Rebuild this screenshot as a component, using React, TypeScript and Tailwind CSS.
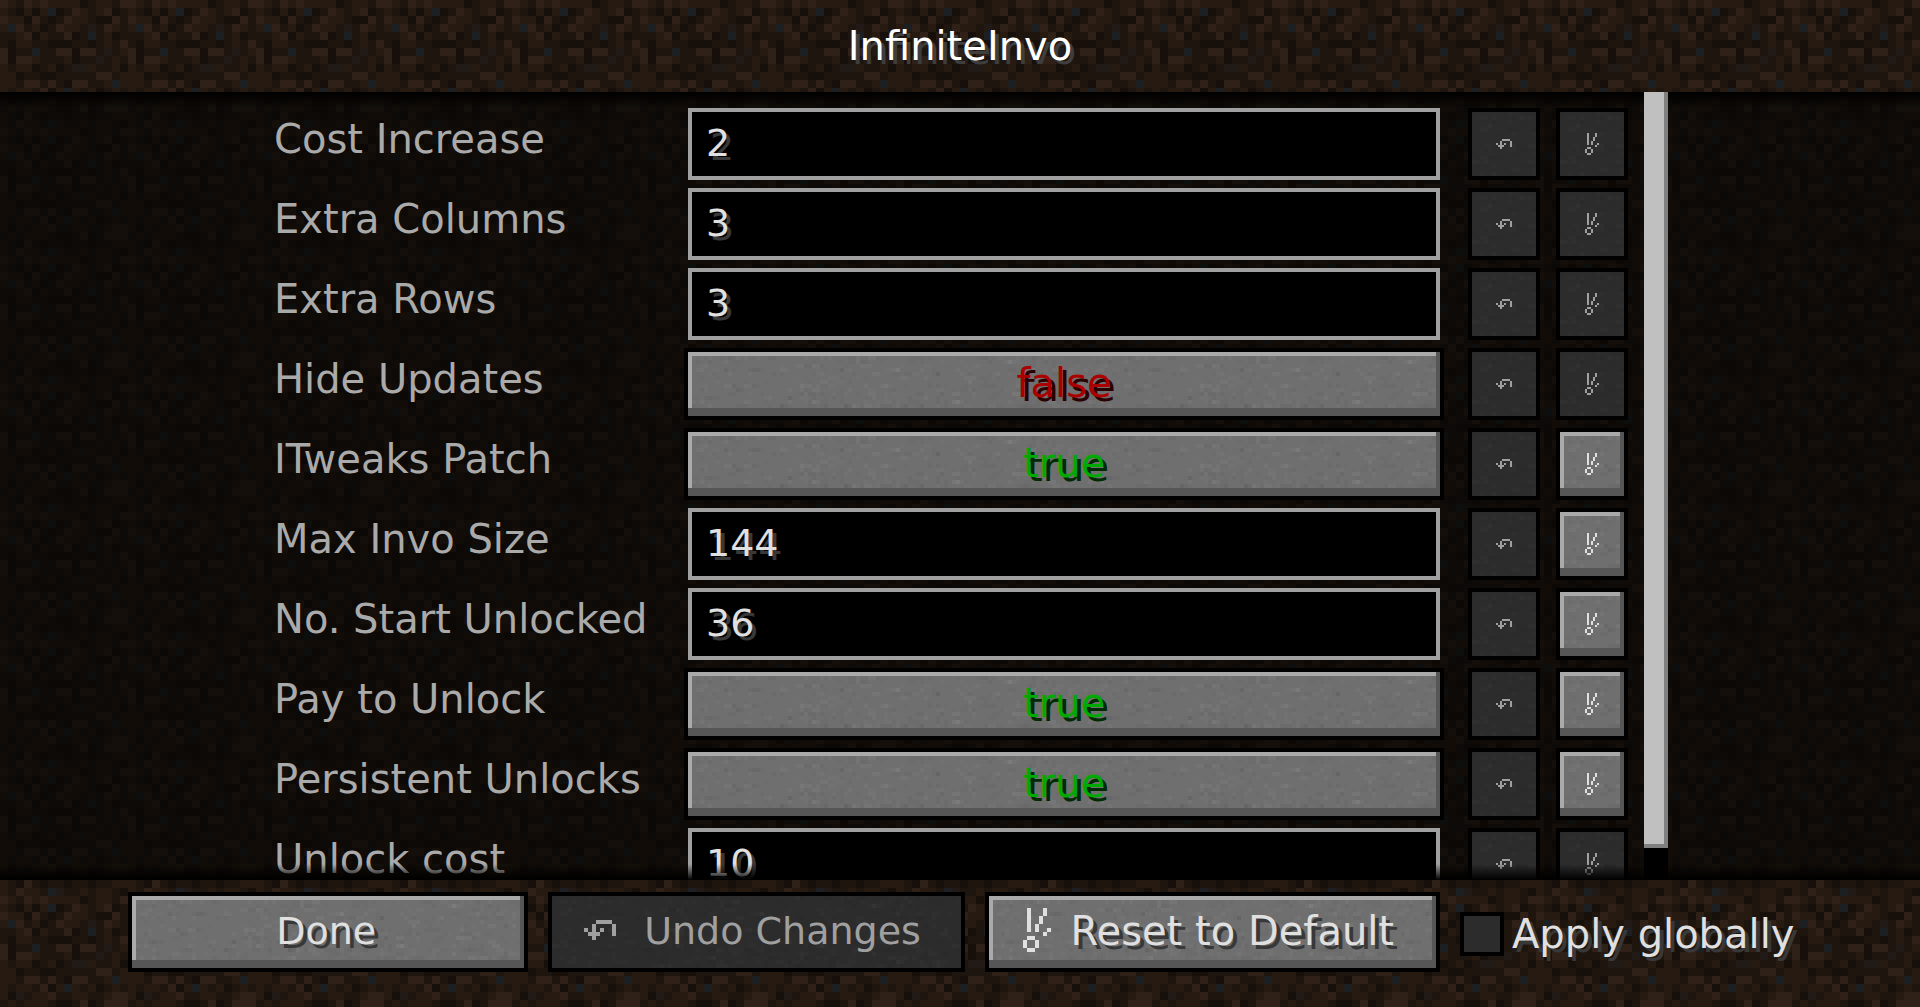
import React, { useState } from "react";

const DIRT = [
  "dcbdcdccccabccbd",
  "cbacaceabdcbcdab",
  "dccadbabdccbaadb",
  "cedbcabdccbfbdcb",
  "bbcdacbbdabebcab",
  "baccbbaaabbabcbd",
  "dabbebbddaddbfbc",
  "daddcbbbcabbfbcb",
  "cbccabcabffcbbca",
  "ccabbaabbbbbddbc",
  "ccbddbdbaddbbcec",
  "cbccbdacecbcabcb",
  "cafbccdbbccbbcdd",
  "bcbcccbaabdabddd",
  "cbadbabbabbabbcc",
  "cbdccbefbbcbccba",
];

const DIRT_COLORS: Record<string, string> = {
  a: "#170f0a",
  b: "#1f150f",
  c: "#261a11",
  d: "#2f2118",
  e: "#1c2022",
  f: "#221a17",
};

/* Grain of the stone buttons: a fixed pseudo-random set of light and dark flecks. */
const FLECKS = (() => {
  let seed = 7;
  const next = () => {
    seed = (seed * 16807) % 2147483647;
    return seed / 2147483647;
  };
  return Array.from({ length: 700 }, () => ({
    x: Math.floor(next() * 100) * 4,
    y: Math.floor(next() * 20) * 4,
    w: next() > 0.65 ? 8 : 4,
    light: next() > 0.5,
    o: 0.01 + next() * 0.03,
  }));
})();

function Textures() {
  return (
    <svg aria-hidden="true" className="absolute inset-0 h-full w-full" shapeRendering="crispEdges">
      <defs>
        <pattern id="dirt" width="128" height="128" patternUnits="userSpaceOnUse">
          {DIRT.map((row, y) =>
            row.split("").map((c, x) => (
              <rect key={`${x}-${y}`} x={x * 8} y={y * 8} width="8" height="8" fill={DIRT_COLORS[c]} />
            ))
          )}
        </pattern>
        <pattern id="stone" width="400" height="80" patternUnits="userSpaceOnUse">
          {FLECKS.map((f, i) => (
            <rect key={i} x={f.x} y={f.y} width={f.w} height="4" fill={f.light ? "#fff" : "#000"} opacity={f.o} />
          ))}
        </pattern>
      </defs>
      <rect width="100%" height="100%" fill="url(#dirt)" />
    </svg>
  );
}

function Pixels({ rows, className }: { rows: string[]; className: string }) {
  const d = rows
    .map((row, y) =>
      row
        .split("")
        .map((c, x) => (c === "#" ? `M${x} ${y}h1v1h-1z` : ""))
        .join("")
    )
    .join("");
  return (
    <svg
      aria-hidden="true"
      className={`shrink-0 ${className}`}
      viewBox={`0 0 ${rows[0].length} ${rows.length}`}
      shapeRendering="crispEdges"
      fill="currentColor"
    >
      <path d={d} />
    </svg>
  );
}

const UNDO = ["...####.", "..#....#", "#.#.#..#", ".###...#", "..#....."];
const RESET = [
  ".#...#.",
  ".#...#.",
  ".#..#..",
  ".#..#..",
  ".#.#...",
  ".#.#..#",
  ".....#.",
  ".##....",
  "#..#...",
  "#..#...",
  ".##....",
];

function StoneButton({
  className,
  disabled = false,
  label,
  id,
  onClick,
  children,
}: {
  className: string;
  disabled?: boolean;
  label?: string;
  id?: string;
  onClick?: () => void;
  children: React.ReactNode;
}) {
  return (
    <button
      type="button"
      id={id}
      disabled={disabled}
      aria-label={label}
      onClick={onClick}
      className={`relative border-4 border-black ${disabled ? "bg-[#2c2c2c] text-[#a0a0a0]" : "bg-[#6f6f6f] text-[#e0e0e0]"} ${className}`}
    >
      <svg aria-hidden="true" className={`absolute inset-0 h-full w-full ${disabled ? "opacity-50" : ""}`} shapeRendering="crispEdges">
        <rect width="100%" height="100%" fill="url(#stone)" />
      </svg>
      {!disabled && (
        <span className="absolute inset-0 shadow-[inset_0_-8px_0_#565656,inset_-4px_0_0_#565656,inset_0_4px_0_#aaaaaa,inset_4px_0_0_#aaaaaa]" />
      )}
      <span className="relative flex h-full items-center justify-center">{children}</span>
    </button>
  );
}

type Option = { name: string; value: string | boolean; canReset: boolean };

const OPTIONS: Option[] = [
  { name: "Cost Increase", value: "2", canReset: false },
  { name: "Extra Columns", value: "3", canReset: false },
  { name: "Extra Rows", value: "3", canReset: false },
  { name: "Hide Updates", value: false, canReset: false },
  { name: "ITweaks Patch", value: true, canReset: true },
  { name: "Max Invo Size", value: "144", canReset: true },
  { name: "No. Start Unlocked", value: "36", canReset: true },
  { name: "Pay to Unlock", value: true, canReset: true },
  { name: "Persistent Unlocks", value: true, canReset: true },
  { name: "Unlock cost", value: "10", canReset: false },
];

function OptionRow({ option }: { option: Option }) {
  const [value, setValue] = useState(option.value);
  const id = option.name.toLowerCase().replace(/[^a-z]+/g, "-");
  return (
    <li className="flex h-[72px] shrink-0 items-stretch">
      <label htmlFor={id} className="flex w-[410px] shrink-0 items-center pb-2.5 whitespace-nowrap text-[#aaaaaa]">
        {option.name}
      </label>
      {typeof value === "boolean" ? (
        <StoneButton id={id} className="min-w-0 flex-1" onClick={() => setValue(!value)}>
          <span
            className={
              value
                ? "pb-0.5 text-[#00aa00] [text-shadow:4px_4px_0_#002a00]"
                : "pb-0.5 text-[#aa0000] [text-shadow:4px_4px_0_#2a0000]"
            }
          >
            {String(value)}
          </span>
        </StoneButton>
      ) : (
        <input
          id={id}
          type="text"
          value={value}
          onChange={(e) => setValue(e.target.value)}
          className="mx-1 min-w-0 flex-1 border-4 border-[#a0a0a0] bg-black px-3.5 pb-0.5 text-[38px] text-[#e0e0e0] outline-none [text-shadow:4px_4px_0_#383838]"
        />
      )}
      <StoneButton className="ml-6 w-[72px] shrink-0" disabled label={`Undo ${option.name}`}>
        <Pixels rows={UNDO} className="h-[10px] w-4" />
      </StoneButton>
      <StoneButton className="ml-4 w-[72px] shrink-0" disabled={!option.canReset} label={`Reset ${option.name}`}>
        <Pixels rows={RESET} className="h-[22px] w-[14px]" />
      </StoneButton>
    </li>
  );
}

export default function App() {
  const [global, setGlobal] = useState(false);
  return (
    <div className="relative flex h-screen flex-col overflow-hidden bg-[#1f150f] font-['DejaVu_Sans',sans-serif] text-[40px] leading-[48px]">
      <Textures />
      <header className="relative flex h-[92px] shrink-0 items-center justify-center">
        <h1 className="text-white [text-shadow:4px_4px_0_#3e3e3e]">InfiniteInvo</h1>
      </header>

      <main className="relative min-h-0 flex-1 overflow-hidden bg-[#040402]/60">
        <div className="mx-auto flex h-full max-w-[1416px] pl-[22px]">
          <ul className="flex min-w-0 flex-1 flex-col gap-2 pt-4 pr-4">
            {OPTIONS.map((o) => (
              <OptionRow key={o.name} option={o} />
            ))}
          </ul>
          <div className="relative z-10 flex w-6 shrink-0 flex-col bg-black pb-8">
            <div className="flex-1 border-r-4 border-b-4 border-[#808080] bg-[#c0c0c0]" />
          </div>
        </div>
        <div className="pointer-events-none absolute inset-x-0 top-0 h-4 bg-linear-to-b from-black to-transparent" />
        <div className="pointer-events-none absolute inset-x-0 bottom-0 h-4 bg-linear-to-t from-black to-transparent" />
      </main>

      <footer className="relative h-[127px] shrink-0 pt-3">
        <div className="mx-auto flex max-w-[1664px] items-center gap-5">
          <StoneButton className="h-20 min-w-0 flex-[400]">
            <span className="pr-1 pb-0.5 text-[38px] [text-shadow:4px_4px_0_#383838]">Done</span>
          </StoneButton>
          <StoneButton className="h-20 min-w-0 flex-[416]" disabled>
            <Pixels rows={UNDO} className="mr-7 mb-1 h-5 w-8" />
            <span className="pr-2 pb-0.5 text-[38px] whitespace-nowrap">Undo Changes</span>
          </StoneButton>
          <StoneButton className="h-20 min-w-0 flex-[456]">
            <Pixels rows={RESET} className="mr-5 mb-1 h-11 w-7" />
            <span className="pr-2 pb-0.5 whitespace-nowrap [text-shadow:4px_4px_0_#383838]">Reset to Default</span>
          </StoneButton>
          <label className="mt-1 flex w-[332px] shrink-0 items-center gap-2 whitespace-nowrap text-[#e0e0e0] [text-shadow:4px_4px_0_#383838]">
            <input
              type="checkbox"
              checked={global}
              onChange={(e) => setGlobal(e.target.checked)}
              className="size-11 shrink-0 appearance-none border-4 border-black bg-[#2c2c2c] checked:bg-[#6f6f6f]"
            />
            Apply globally
          </label>
        </div>
      </footer>
    </div>
  );
}
